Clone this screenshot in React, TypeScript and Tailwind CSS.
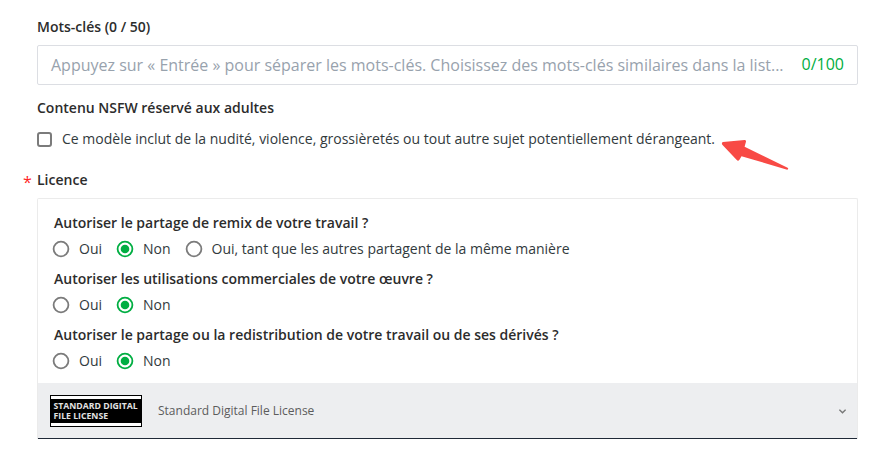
import { useState } from "react";
import { clsx } from "clsx";

const licenseQuestions = [
  {
    title: "Autoriser le partage de remix de votre travail ?",
    options: [
      "Oui",
      "Non",
      "Oui, tant que les autres partagent de la même manière",
    ],
  },
  {
    title: "Autoriser les utilisations commerciales de votre œuvre ?",
    options: ["Oui", "Non"],
  },
  {
    title:
      "Autoriser le partage ou la redistribution de votre travail ou de ses dérivés ?",
    options: ["Oui", "Non"],
  },
];

const Radio = ({
  label,
  checked,
  onClick,
}: {
  label: string;
  checked: boolean;
  onClick: () => void;
}) => {
  return (
    <button
      type="button"
      role="radio"
      aria-checked={checked}
      className="flex h-6 items-center"
      onClick={onClick}
    >
      <svg
        className={clsx(
          "mr-[9px] size-[18px]",
          checked ? "text-[#00ae42]" : "text-[#7b7b7b]"
        )}
        viewBox="0 0 18 18"
      >
        <circle
          cx="9"
          cy="9"
          r="7.4"
          fill="none"
          stroke="currentColor"
          strokeWidth="1.8"
        />
        {checked && <circle cx="9" cy="9" r="4.3" fill="currentColor" />}
      </svg>
      <span className="whitespace-nowrap text-[#323a3d]">{label}</span>
    </button>
  );
};

const Question = ({ title, options }: { title: string; options: string[] }) => {
  const [selected, setSelected] = useState("Non");

  return (
    <div className="h-14">
      <h3 className="h-7 pl-px font-semibold leading-7 text-[#2c2c2c]">
        {title}
      </h3>
      <div role="radiogroup" className="-ml-px flex gap-[14px]">
        {options.map((option) => (
          <Radio
            key={option}
            label={option}
            checked={selected === option}
            onClick={() => setSelected(option)}
          />
        ))}
      </div>
    </div>
  );
};

const App = () => {
  const [nsfw, setNsfw] = useState(false);

  return (
    <main className="h-[458px] w-[878px] overflow-hidden bg-white pl-[37px] pr-5 pt-[17px] font-['Open_Sans',sans-serif] text-sm leading-5 text-[#323a3d]">
      <h2 className="font-semibold text-[#2c2c2c]">Mots-clés (0 / 50)</h2>
      <div className="mt-2 flex h-10 items-center justify-between rounded-[2px] border border-[#dcdee3] px-[13px] text-base">
        <span className="whitespace-nowrap text-[#98a2ad]">
          Appuyez sur « Entrée » pour séparer les mots-clés. Choisissez des
          mots-clés similaires dans la list...
        </span>
        <span className="-mt-0.5 text-[#00ae42]">0/100</span>
      </div>

      <h2 className="mt-[13px] font-semibold text-[#2c2c2c]">
        Contenu NSFW réservé aux adultes
      </h2>
      <div className="mt-[11px] flex h-5 items-center">
        <button
          type="button"
          role="checkbox"
          aria-checked={nsfw}
          className={clsx(
            "mr-[10px] size-[15px] rounded-[3px] border-2 border-[#7b7b7b]",
            nsfw && "bg-[#00ae42]"
          )}
          onClick={() => setNsfw(!nsfw)}
        />
        <span className="whitespace-nowrap">
          Ce modèle inclut de la nudité, violence, grossièretés ou tout autre
          sujet potentiellement dérangeant.
        </span>
      </div>

      <h2 className="relative mt-[21px] font-semibold text-[#2c2c2c]">
        <span className="absolute -left-[14px] top-[2px] text-base leading-5 font-normal text-[#ff1f1f]">
          *
        </span>
        Licence
      </h2>
      <section className="mt-2 h-[241px] rounded-t-[2px] border-x border-t border-[#ebebeb]">
        <div className="h-[184px] px-[15px] pt-[10px]">
          {licenseQuestions.map((question) => (
            <Question key={question.title} {...question} />
          ))}
        </div>
        <div className="flex h-14 items-center border-b border-[#1f2937] bg-[#edeef0] pl-3 pr-[11px]">
          <div className="flex h-8 w-[92px] flex-col justify-center border border-black bg-white">
            <div className="h-6 whitespace-nowrap bg-black pl-[2.5px] pt-[2px] text-[8.7px] font-bold leading-[10px] text-[#e2e2e2]">
              <p>STANDARD DIGITAL</p>
              <p>FILE LICENSE</p>
            </div>
          </div>
          <span className="ml-4 text-xs text-[#5c5c5c]">
            Standard Digital File License
          </span>
          <svg
            className="ml-auto mt-px"
            width="7"
            height="5"
            viewBox="0 0 7 5"
            fill="none"
            stroke="#777777"
            strokeWidth="1.4"
          >
            <path d="M.4.7 3.5 3.8 6.6.7" />
          </svg>
        </div>
      </section>

      {/* pointer towards the NSFW option */}
      <svg
        className="absolute left-[720px] top-[138px]"
        width="70"
        height="34"
        viewBox="0 0 70 34"
        fill="#f84a45"
      >
        <path d="M3 3.9 24.6 2q1.8 0 1.3 2L24.6 8.7 67.6 29.8q1.4 1.3-.4 1.9L21.5 18.2 19.3 22q-1.3 1.4-2.8-.2L2.3 6.7Q1.2 4.5 3 3.9Z" />
      </svg>
    </main>
  );
};

export default App;
